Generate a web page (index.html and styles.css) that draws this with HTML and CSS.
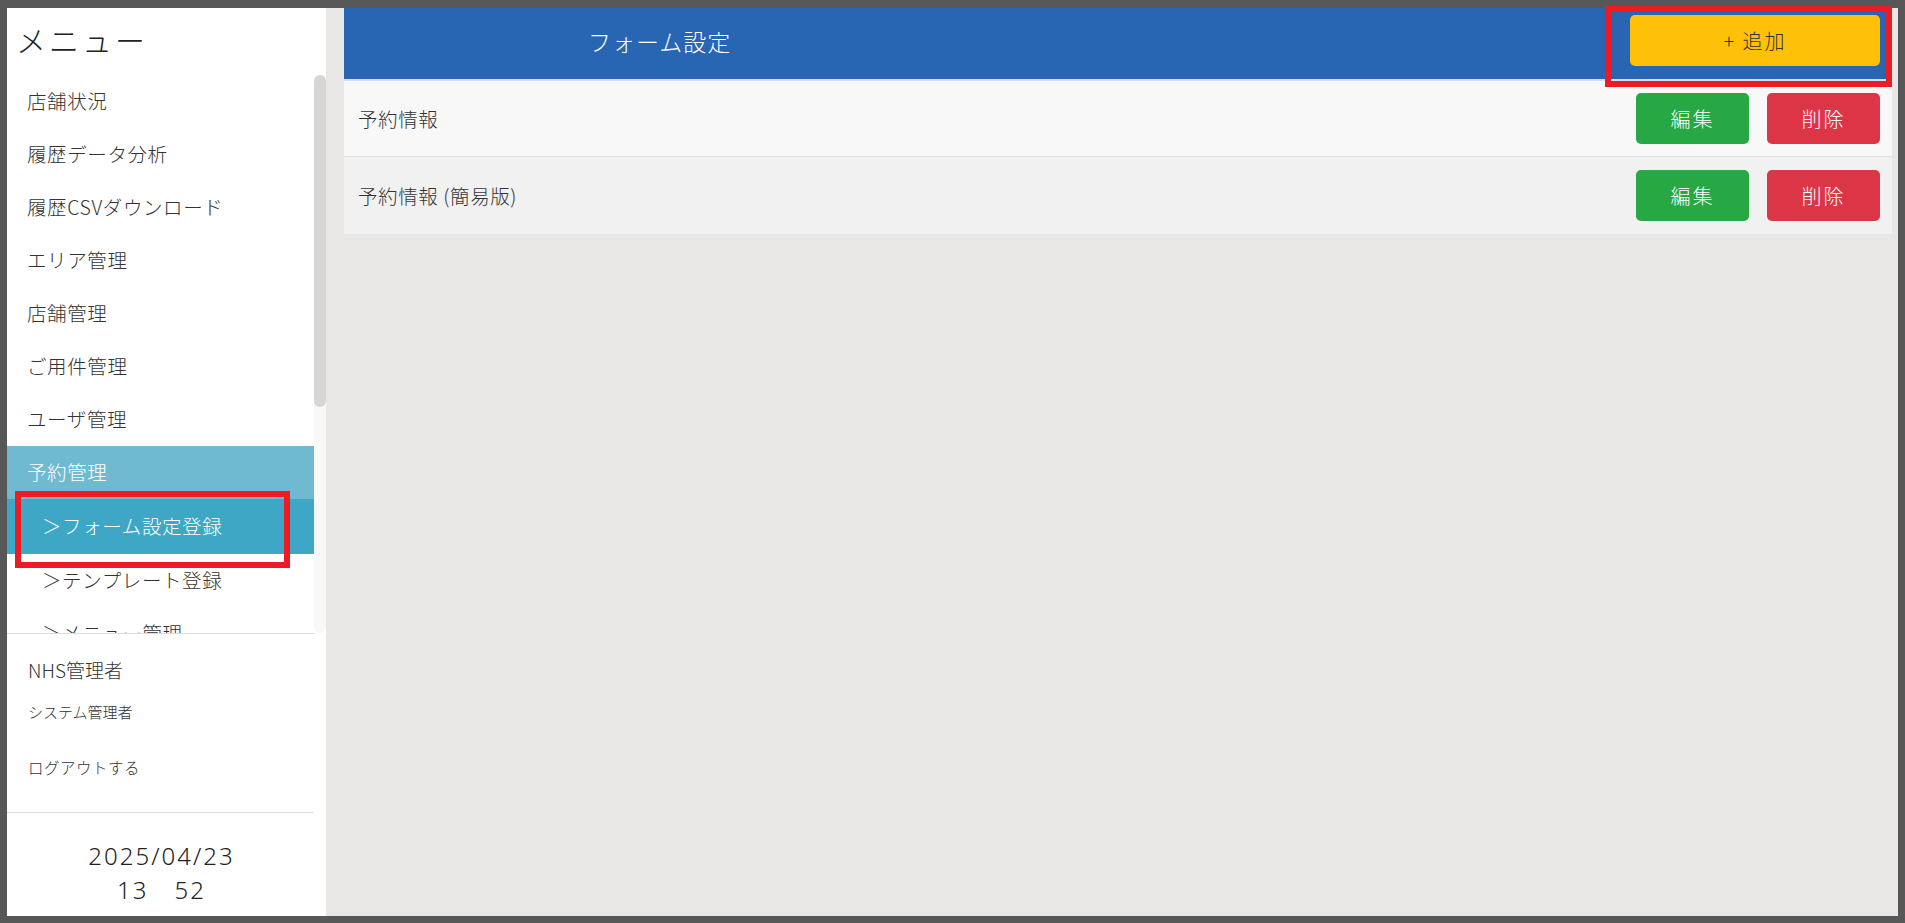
FILE: index.html
```html
<!DOCTYPE html>
<html lang="ja">
<head>
  <meta charset="UTF-8">
  <meta name="viewport" content="width=device-width, initial-scale=1.0">
  <title>フォーム設定</title>
  <link rel="stylesheet" href="styles.css">
</head>
<body>
  <div class="frame">
    <aside class="sidebar">
      <div class="menu-title">メニュー</div>
      <div class="menu-wrap">
        <nav class="menu-list">
          <a class="menu-item">店舗状況</a>
          <a class="menu-item">履歴データ分析</a>
          <a class="menu-item">履歴CSVダウンロード</a>
          <a class="menu-item">エリア管理</a>
          <a class="menu-item">店舗管理</a>
          <a class="menu-item">ご用件管理</a>
          <a class="menu-item">ユーザ管理</a>
          <a class="menu-item open">予約管理</a>
          <a class="menu-item sub active">＞フォーム設定登録</a>
          <a class="menu-item sub">＞テンプレート登録</a>
          <a class="menu-item sub">＞メニュー管理</a>
        </nav>
        <div class="scroll-track">
          <div class="scroll-thumb"></div>
        </div>
      </div>
      <div class="account">
        <div class="user-name">NHS管理者</div>
        <div class="user-role">システム管理者</div>
        <a class="logout">ログアウトする</a>
      </div>
      <div class="clock">
        <div>2025/04/23</div>
        <div>13<span class="colon">：</span>52</div>
      </div>
    </aside>

    <main class="main">
      <div class="card">
        <div class="card-header">
          <div class="card-title">フォーム設定</div>
          <button class="btn btn-add">+ 追加</button>
        </div>
        <div class="form-row">
          <span class="form-name">予約情報</span>
          <div class="actions">
            <button class="btn btn-edit">編集</button>
            <button class="btn btn-delete">削除</button>
          </div>
        </div>
        <div class="form-row alt">
          <span class="form-name">予約情報 (簡易版)</span>
          <div class="actions">
            <button class="btn btn-edit">編集</button>
            <button class="btn btn-delete">削除</button>
          </div>
        </div>
      </div>
    </main>
  </div>

  <!-- callout boxes drawn over the screen -->
  <div class="callout callout-add"></div>
  <div class="callout callout-menu"></div>
</body>
</html>
```

FILE: styles.css
```css
:root {
  --frame: #575757;
  --main-bg: #e9e7e5;
  --header-blue: #2865b3;
  --text: #333;
  --open-bg: #70bad1;
  --active-bg: #3fa7c6;
  --line: #dcdcdc;
}
* {
  box-sizing: border-box;
}
body {
  margin: 0;
  background: var(--frame);
  font-family: "Noto Sans CJK JP", "Noto Sans", sans-serif;
  font-weight: 300;
  color: var(--text);
}
.frame {
  display: flex;
  height: 923px;
  padding: 8px 7px 7px 7px;
}
.sidebar {
  width: 319px;
  background: #fff;
  display: flex;
  flex-direction: column;
}
.menu-title {
  height: 67px;
  display: flex;
  align-items: center;
  padding: 0 0 5px 9px;
  font-size: 30px;
  color: #222;
  letter-spacing: 3px;
}
.menu-wrap {
  display: flex;
  height: 558px;
}
.menu-list {
  flex: 1;
  overflow: hidden;
}
.scroll-track {
  width: 12px;
  background: #f8f8f8;
  border-radius: 6px;
}
.scroll-thumb {
  height: 332px;
  background: #d6d6d6;
  border-radius: 6px;
}
.menu-item {
  display: flex;
  align-items: center;
  height: 53px;
  padding: 0 0 2px 20px;
  font-size: 19.5px;
  letter-spacing: 0.6px;
  color: var(--text);
}
.menu-item.sub {
  padding-left: 35px;
}
.menu-item.open {
  background: var(--open-bg);
  color: #fff;
}
.menu-item.active {
  background: var(--active-bg);
  color: #fff;
  height: 55px;
}
.account {
  margin-right: 12px;
  border-top: 1px solid var(--line);
  border-bottom: 1px solid var(--line);
  padding: 19px 0 32px 21px;
}
.user-name {
  height: 34px;
  line-height: 34px;
  font-size: 19px;
}
.user-role {
  margin-top: 12px;
  line-height: 26px;
  font-size: 15px;
}
.logout {
  display: block;
  margin-top: 29px;
  line-height: 26px;
  font-size: 15.5px;
  letter-spacing: 0.5px;
}
.clock {
  flex: 1;
  padding: 26px 10px 0 0;
  text-align: center;
  font-family: "Noto Sans", sans-serif;
  font-size: 24px;
  line-height: 34px;
  letter-spacing: 2px;
  color: #222;
}
.colon {
  visibility: hidden;
}
.main {
  flex: 1;
  background: var(--main-bg);
  padding: 0 6px 0 18px;
}
.card-header {
  display: flex;
  align-items: center;
  justify-content: space-between;
  background: var(--header-blue);
  padding: 7px 12px 13px 12px;
  border-bottom: 2px solid #d9dde6;
}
.card-title {
  margin-left: 232px;
  font-size: 23px;
  color: #fff;
  letter-spacing: 1px;
}
.btn {
  border: none;
  border-radius: 5px;
  font-family: inherit;
  font-weight: 300;
  font-size: 20px;
  letter-spacing: 2px;
  cursor: pointer;
}
.btn-add {
  width: 250px;
  height: 51px;
  background: #ffc107;
  color: var(--text);
}
.form-row {
  display: flex;
  align-items: center;
  justify-content: space-between;
  height: 76px;
  padding: 0 12px 0 14px;
  background: #f8f8f8;
  border-bottom: 1px solid #e0e0e0;
}
.form-row.alt {
  background: #f1f1f1;
  border-bottom: none;
  height: 77px;
}
.form-name {
  font-size: 19.5px;
  letter-spacing: 0.6px;
}
.actions {
  display: flex;
  gap: 18px;
}
.btn-edit,
.btn-delete {
  width: 113px;
  height: 51px;
  color: #fff;
}
.btn-edit {
  background: #28a745;
}
.btn-delete {
  background: #dc3545;
}
.callout {
  position: absolute;
  border: 6px solid #ec1c24;
}
.callout-add {
  left: 1605px;
  top: 6px;
  width: 287px;
  height: 81px;
}
.callout-menu {
  left: 15px;
  top: 491px;
  width: 275px;
  height: 77px;
}
```
